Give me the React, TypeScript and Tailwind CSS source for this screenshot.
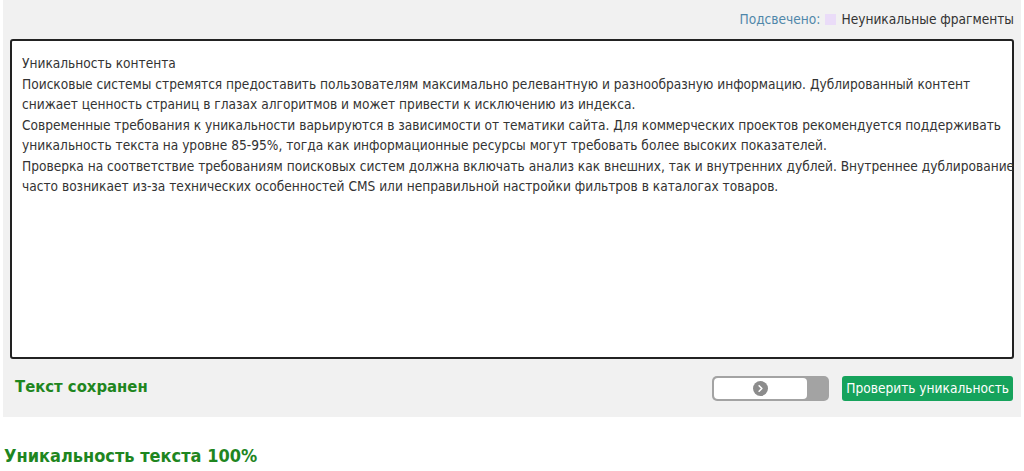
import { ChevronRight } from "lucide-react";

const lines = [
  "Уникальность контента",
  "Поисковые системы стремятся предоставить пользователям максимально релевантную и разнообразную информацию. Дублированный контент",
  "снижает ценность страниц в глазах алгоритмов и может привести к исключению из индекса.",
  "Современные требования к уникальности варьируются в зависимости от тематики сайта. Для коммерческих проектов рекомендуется поддерживать",
  "уникальность текста на уровне 85-95%, тогда как информационные ресурсы могут требовать более высоких показателей.",
  "Проверка на соответствие требованиям поисковых систем должна включать анализ как внешних, так и внутренних дублей. Внутреннее дублирование",
  "часто возникает из-за технических особенностей CMS или неправильной настройки фильтров в каталогах товаров.",
];

export default function App() {
  return (
    <div className="w-[1024px] h-[471px] bg-white font-['DejaVu_Sans_Condensed','DejaVu_Sans',sans-serif] text-[13.6px] text-[#333]">
      {/* Panel */}
      <div className="ml-[3px] mr-[3px] h-[417px] bg-[#f1f1f1] pt-[9px] px-[7px]">
        <div className="flex justify-end items-center gap-[5px] pr-[0px] h-[20px]">
          <span className="text-[#4f87aa]">Подсвечено:</span>
          <span className="w-[11px] h-[11px] bg-[#eadcf8]" />
          <span className="text-[#333]">Неуникальные фрагменты</span>
        </div>

        {/* Text area */}
        <div className="mt-[10px] h-[320px] bg-white border-2 border-[#222] rounded-[3px] px-[10px] pt-[12px] leading-[20.5px] text-[#333]">
          {lines.map((l, i) => (
            <div key={i} className="whitespace-nowrap">{l}</div>
          ))}
        </div>

        {/* Actions */}
        <div className="mt-[16px] flex items-center">
          <span className="ml-[5px] mb-[2px] text-[16.5px] font-bold text-[#1f861f]">Текст сохранен</span>
          <div className="ml-auto w-[117px] h-[25px] rounded-[5px] bg-[#a3a3a3] p-[2px] flex">
            <div className="w-[93px] h-full rounded-[4px] bg-white flex items-center justify-center">
              <span className="w-[15px] h-[15px] rounded-full bg-[#8c8c8c] flex items-center justify-center">
                <ChevronRight className="w-[11px] h-[11px] text-white" strokeWidth={3.5} />
              </span>
            </div>
          </div>
          <button className="ml-[13px] mr-[1px] h-[25px] px-[4px] rounded-[3px] bg-[#16a35c] text-white text-[13.6px]">
            Проверить уникальность
          </button>
        </div>
      </div>

      <div className="mt-[27px] ml-[4px] text-[18px] leading-[24px] font-bold text-[#1f861f]">Уникальность текста 100%</div>
    </div>
  );
}
